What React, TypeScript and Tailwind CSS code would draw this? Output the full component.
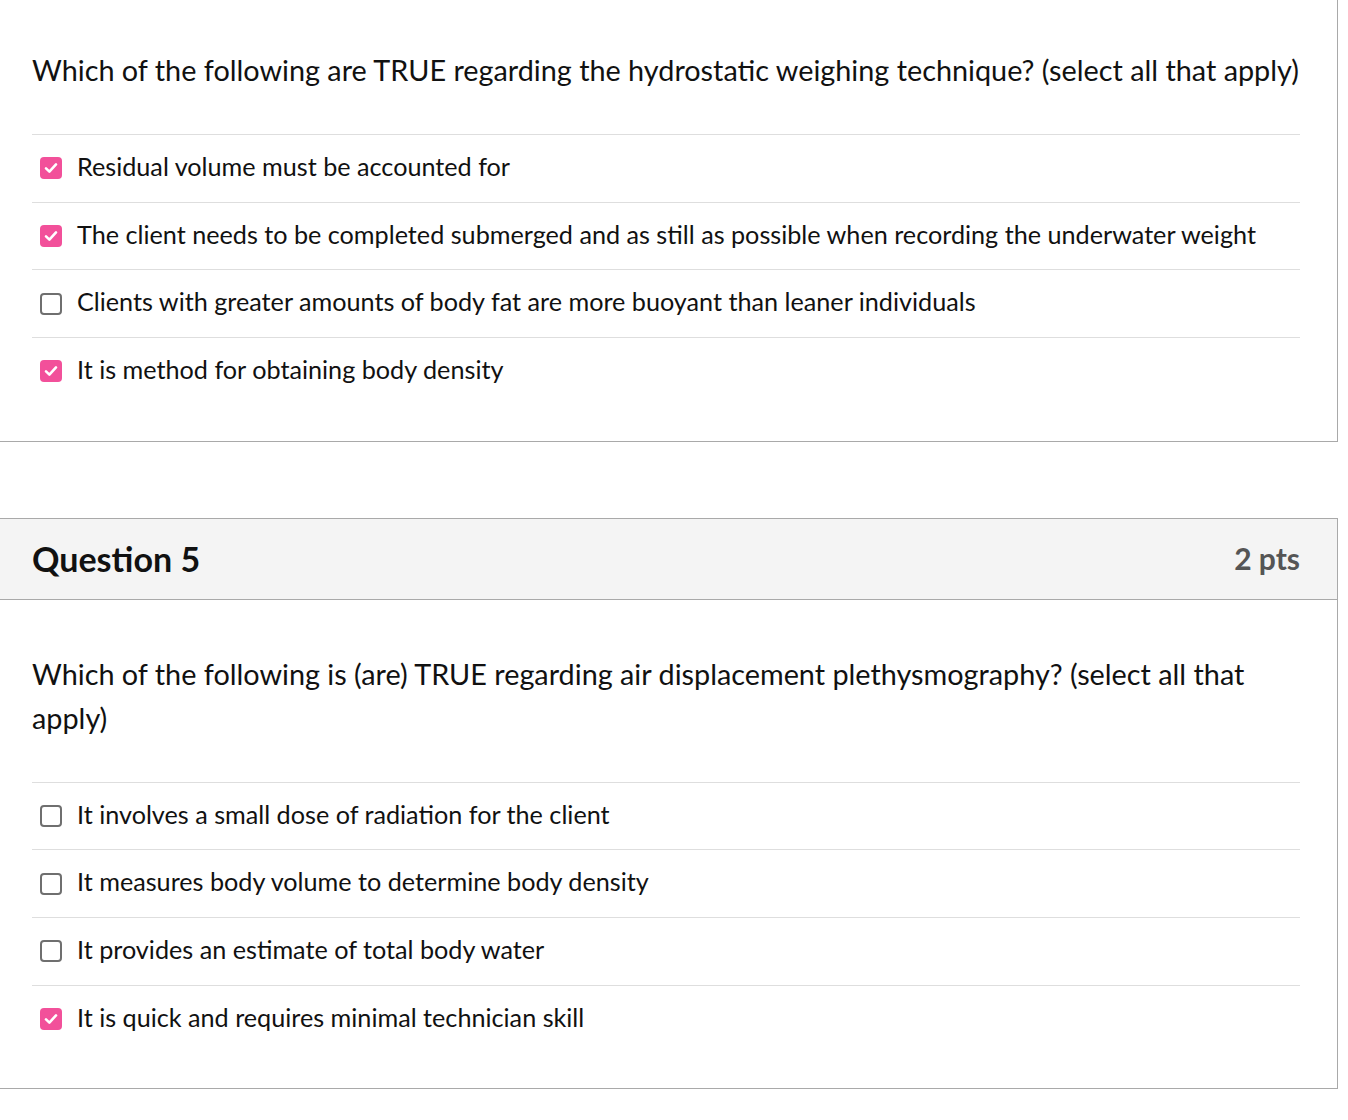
import React from "react";

type Opt = { text: string; checked: boolean };

const q4: Opt[] = [
  { text: "Residual volume must be accounted for", checked: true },
  { text: "The client needs to be completed submerged and as still as possible when recording the underwater weight", checked: true },
  { text: "Clients with greater amounts of body fat are more buoyant than leaner individuals", checked: false },
  { text: "It is method for obtaining body density", checked: true },
];

const q5: Opt[] = [
  { text: "It involves a small dose of radiation for the client", checked: false },
  { text: "It measures body volume to determine body density", checked: false },
  { text: "It provides an estimate of total body water", checked: false },
  { text: "It is quick and requires minimal technician skill", checked: true },
];

function Box({ checked }: { checked: boolean }) {
  if (checked) {
    return (
      <div className="w-[22px] h-[22px] rounded-[4px] bg-[#f2509a] flex items-center justify-center shrink-0">
        <svg width="16" height="16" viewBox="0 0 16 16" fill="none">
          <path d="M3 8.4 L6.4 11.6 L13 4.4" stroke="white" strokeWidth="2.6" strokeLinecap="round" strokeLinejoin="round" />
        </svg>
      </div>
    );
  }
  return <div className="w-[22px] h-[22px] rounded-[4px] border-2 border-[#6f6f6f] bg-white shrink-0" />;
}

function Options({ opts }: { opts: Opt[] }) {
  return (
    <div>
      {opts.map((o, i) => (
        <div key={i} className="border-t border-[#dedede] h-[67.7px] flex items-center pl-[8px] gap-[15px]">
          <Box checked={o.checked} />
          <span className="text-[25.2px] leading-[32px] text-[#111] pb-[5px]">{o.text}</span>
        </div>
      ))}
    </div>
  );
}

export default function App() {
  return (
    <div className="w-[1348px] min-h-[1120px] bg-white" style={{ fontFamily: "Lato, 'Open Sans', sans-serif" }}>
      <div className="w-[1338px] border-r border-b border-[#a9a9a9] pl-[32px] pr-[37px] pt-[48px] pb-[36px]">
        <p className="text-[28.8px] leading-[44px] text-[#111] mb-[42px]">
          Which of the following are TRUE regarding the hydrostatic weighing technique? (select all that apply)
        </p>
        <Options opts={q4} />
      </div>
      <div className="h-[76px]" />
      <div className="w-[1338px] border-r border-t border-b border-[#a9a9a9]">
        <div className="h-[81px] bg-[#f4f4f4] border-b border-[#a9a9a9] flex items-center justify-between pl-[32px] pr-[37px]">
          <span className="text-[34px] font-bold text-[#111]">Question 5</span>
          <span className="text-[30px] font-bold text-[#555]">2 pts</span>
        </div>
        <div className="pl-[32px] pr-[37px] pt-[52px] pb-[35px]">
          <p className="text-[28.8px] leading-[44px] text-[#111] mb-[42px]">
            Which of the following is (are) TRUE regarding air displacement plethysmography? (select all that apply)
          </p>
          <Options opts={q5} />
        </div>
      </div>
    </div>
  );
}
